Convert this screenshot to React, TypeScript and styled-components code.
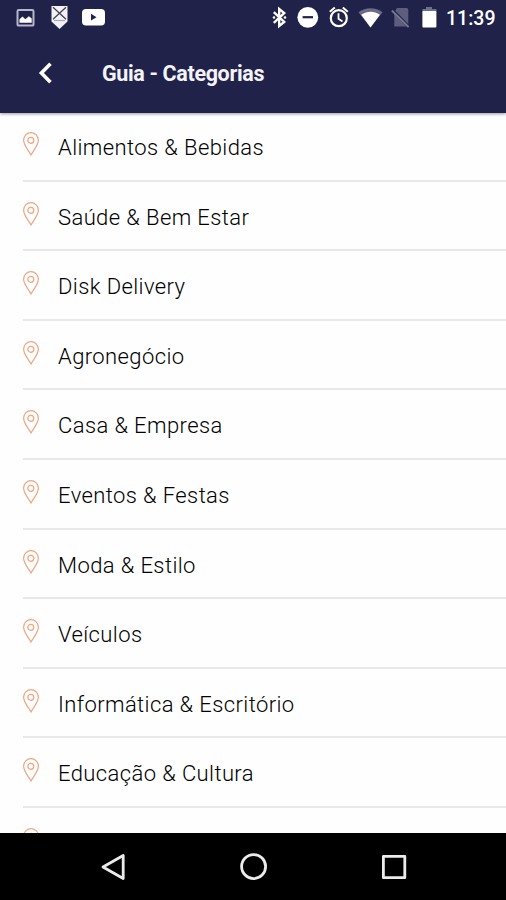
import React from "react";
import styled, { createGlobalStyle } from "styled-components";

const GlobalStyle = createGlobalStyle`
  * { box-sizing: border-box; }
  body { margin: 0; background: #fff; font-family: Roboto, "Liberation Sans", sans-serif; }
`;

const Screen = styled.div`
  width: 506px;
  height: 900px;
  display: flex;
  flex-direction: column;
  overflow: hidden;
  background: #fefefe;
`;

const Header = styled.header`
  flex: none;
  height: 113px;
  background: #20224a;
  color: #fff;
  box-shadow: 0 1px 3px rgba(0, 0, 0, 0.4);
  z-index: 1;
`;

const StatusBar = styled.div`
  height: 36px;
  display: flex;
  justify-content: space-between;
`;

const StatusGlyphs = styled.svg`
  display: block;
  flex: none;
`;

const StatusRight = styled.div`
  display: flex;
`;

const Clock = styled.time`
  width: 60px;
  font-size: 19.5px;
  font-weight: 500;
  line-height: 37px;
  letter-spacing: 0;
  white-space: nowrap;
`;

const TitleBar = styled.div`
  height: 76px;
  display: flex;
  align-items: center;
  padding: 0 0 2px 37px;
`;

const BackButton = styled.button`
  width: 18px;
  height: 24px;
  padding: 0;
  border: 0;
  background: none;
  color: inherit;
`;

const Title = styled.h1`
  margin: 2px 0 0 47px;
  font-size: 21.5px;
  font-weight: 700;
  line-height: 28px;
  letter-spacing: -0.35px;
  color: #f3f3f8;
  white-space: nowrap;
`;

const List = styled.ul`
  flex: 1;
  min-height: 0;
  margin: 0;
  padding: 0 0 0 23px;
  list-style: none;
  overflow: hidden;
`;

const Row = styled.li`
  height: 69.6px;
  display: flex;
  align-items: flex-start;
  gap: 18px;
  padding-top: 20px;
  border-bottom: 2px solid #e8e8e8;

  &:first-child {
    height: 68.6px;
    padding-top: 19px;
  }
`;

const PinIcon = styled.svg`
  flex: none;
  width: 17px;
  height: 24px;
  fill: none;
  stroke: #f0a580;
  stroke-width: 1.2;
`;

const Label = styled.span`
  font-size: 22px;
  font-weight: 300;
  line-height: 31px;
  letter-spacing: 0.4px;
  color: #000;
  white-space: nowrap;
`;

const NavBar = styled.nav`
  flex: none;
  height: 67px;
  display: flex;
  justify-content: space-between;
  align-items: center;
  padding: 0 98px 0 100px;
  background: #000;
`;

const NavIcon = styled.svg`
  width: 28px;
  height: 30px;
  fill: none;
  stroke: #ececec;
  stroke-width: 2.8;
  stroke-linejoin: round;
`;

const categories = [
  "Alimentos & Bebidas",
  "Saúde & Bem Estar",
  "Disk Delivery",
  "Agronegócio",
  "Casa & Empresa",
  "Eventos & Festas",
  "Moda & Estilo",
  "Veículos",
  "Informática & Escritório",
  "Educação & Cultura",
  "",
];

const Pin = () => (
  <PinIcon viewBox="0 0 17 24">
    <path d="M8 23C5.4 18.2.6 13.5.6 8.1a7.4 7.4 0 0 1 14.8 0c0 5.4-4.8 10.1-7.4 14.9z" />
    <circle cx="7.8" cy="8.3" r="3" />
  </PinIcon>
);

const NotificationIcons = () => (
  <StatusGlyphs width="120" height="36" viewBox="0 0 120 36">
    <rect x="17.5" y="10" width="16" height="15.6" rx="1.2" fill="none" stroke="#b5b7cb" strokeWidth="2" />
    <path d="M19.5 22.8v-3.6l3-2.6 2.8 2.6 3.6-3 2.8 2.4v4.2z" fill="#fff" />
    <path d="M51.5 6h16v15.5l-8 7.5-8-7.5z" fill="#f2f2f5" />
    <path d="M53 7.2l13 12M66 7.2l-13 12" stroke="#3d3e51" strokeWidth="1.2" fill="none" />
    <path d="M54 20.5h11" stroke="#a9aab5" strokeWidth="1.2" />
    <rect x="82" y="9" width="23" height="16.5" rx="4" fill="#fff" />
    <path d="M91 13.8l5.5 3.4-5.5 3.4z" fill="#20224a" />
  </StatusGlyphs>
);

const SystemIcons = () => (
  <StatusGlyphs width="176" height="36" viewBox="270 0 176 36">
    <path d="M273.8 12.2l10.4 9.8-5 4V9l5 4-10.4 9.8" fill="none" stroke="#fff" strokeWidth="2.4" />
    <circle cx="274" cy="17.5" r="1.3" fill="#fff" />
    <circle cx="285" cy="17.5" r="1.3" fill="#fff" />
    <circle cx="307.8" cy="17.3" r="10.4" fill="#fff" />
    <path d="M302.6 17.2h10.4" stroke="#20224a" strokeWidth="2.2" />
    <circle cx="338.8" cy="18.2" r="8" fill="none" stroke="#fff" strokeWidth="2.2" />
    <path d="M329.8 11.8l5-4.2M347.8 11.8l-5-4.2" stroke="#fff" strokeWidth="2" />
    <path d="M338.5 13.2v5.6l4 2.6" fill="none" stroke="#fff" strokeWidth="1.8" />
    <path d="M358.5 12.2c7-5.2 17.2-5.2 24 0L370.5 27.5z" fill="#6b6c89" />
    <path d="M361.2 14.8c6-4.2 13.2-4.2 18.7 0L370.5 27.5z" fill="#fff" />
    <path d="M397 8h9.5q1.8 0 1.8 1.8V26.5h-14V12z" fill="#5d5e7d" />
    <path d="M391.5 9l17.5 18" stroke="#20224a" strokeWidth="3" />
    <path d="M391.8 10.5l16.8 16.5" stroke="#777893" strokeWidth="1.8" />
    <path d="M426 7h6v2h4.4v4h-14V9h3.6z" fill="#6f708b" />
    <rect x="422.4" y="11" width="14" height="16.5" rx="1" fill="#fff" />
  </StatusGlyphs>
);

export default function App() {
  return (
    <>
      <GlobalStyle />
      <Screen>
        <Header>
          <StatusBar>
            <NotificationIcons />
            <StatusRight>
              <SystemIcons />
              <Clock>11:39</Clock>
            </StatusRight>
          </StatusBar>
          <TitleBar>
            <BackButton aria-label="Voltar">
              <svg width="18" height="24" viewBox="0 0 18 24" fill="none" stroke="#fff" strokeWidth="3.6">
                <path d="M13.5 2.8L4.4 12l9.1 9.2" />
              </svg>
            </BackButton>
            <Title>Guia - Categorias</Title>
          </TitleBar>
        </Header>
        <List>
          {categories.map((name, i) => (
            <Row key={i}>
              <Pin />
              <Label>{name}</Label>
            </Row>
          ))}
        </List>
        <NavBar>
          <NavIcon viewBox="0 0 28 30">
            <path d="M3 15L23.2 3.5v23z" />
          </NavIcon>
          <NavIcon viewBox="0 0 28 30">
            <circle cx="13.6" cy="14.6" r="12" />
          </NavIcon>
          <NavIcon viewBox="0 0 28 30">
            <path d="M3.4 4.3h21.4v21.4H3.4z" />
          </NavIcon>
        </NavBar>
      </Screen>
    </>
  );
}
